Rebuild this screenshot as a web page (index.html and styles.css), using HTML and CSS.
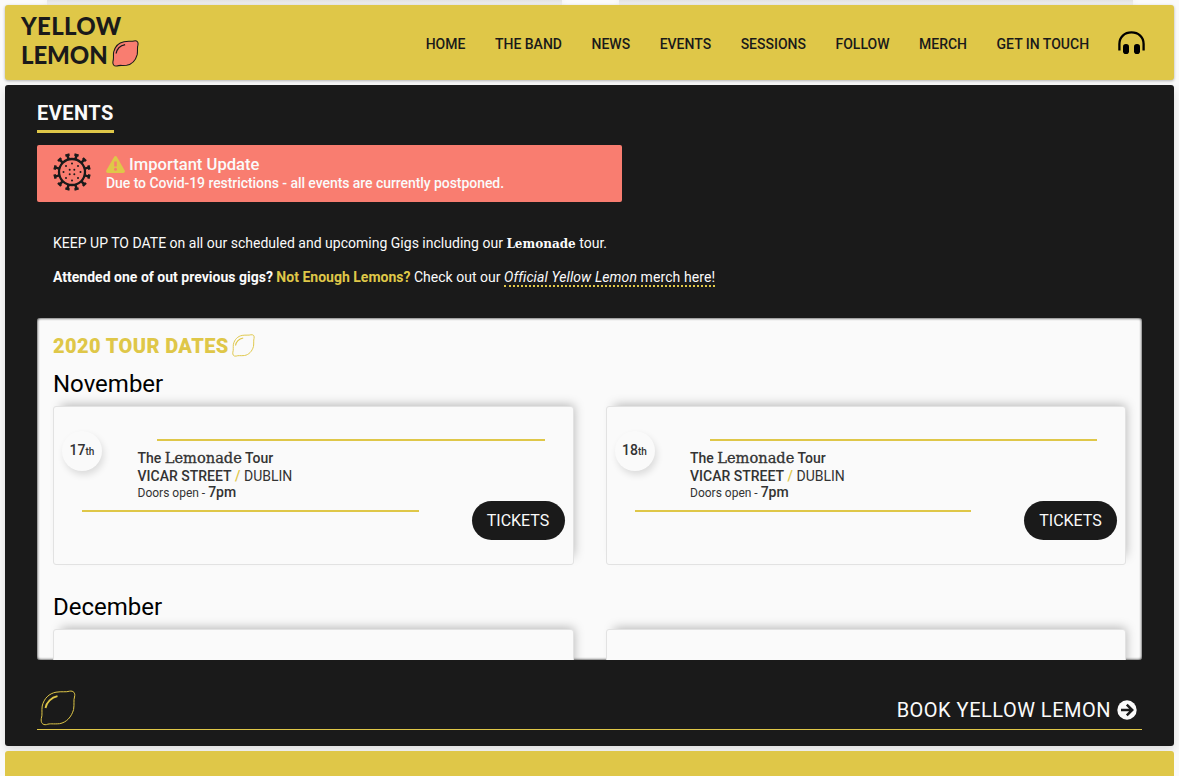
FILE: index.html
```html
<!DOCTYPE html>
<html lang="en">
<head>
<meta charset="utf-8">
<title>Yellow Lemon</title>
<link rel="stylesheet" href="styles.css">
</head>
<body>
<svg class="defs" width="0" height="0">
  <symbol id="lemon" viewBox="0 0 36 36">
    <path d="M16 2.200C22 1.200 26 2.400 29.500 1.200C33.500 .5 35.500 3 34.500 7C33.400 10 34.500 14 33.600 19.500C31.500 27 26.500 32.500 19.500 33.700C13 34.300 10 33.200 6.500 34.600C2.500 35.300 .6 32.500 1.300 28.500C2.600 25 1.500 21 2.200 16C4 8.500 9 3.500 16 2.200Z"/>
    <path class="shine" d="M5.500 18C6.500 12 11.500 7.500 17.500 6.200"/>
  </symbol>
</svg>

<div class="previous"><div class="previous-card"></div><div class="previous-card"></div></div>

<header class="header">
  <a class="logo"><span>YELLOW</span><span class="logo-row">LEMON <svg class="lemon lemon-logo"><use href="#lemon"/></svg></span></a>
  <nav class="nav">
    <a>HOME</a><a>THE BAND</a><a>NEWS</a><a>EVENTS</a><a>SESSIONS</a><a>FOLLOW</a><a>MERCH</a><a>GET IN TOUCH</a>
    <svg class="headphones" viewBox="0 0 27 25"><path d="M1.400 19.500V13C1.400 6 6.500 1.400 13.500 1.400S25.600 6 25.600 13V19.500" fill="none" stroke="#000" stroke-width="2.300"/><rect x="5" y="13" width="6" height="10" rx="2.800"/><rect x="16" y="13" width="6" height="10" rx="2.800"/></svg>
  </nav>
</header>

<main class="events">
  <h2 class="title"><span>EVENTS</span></h2>
  <div class="alert">
    <svg class="virus" viewBox="-19 -19 38 38">
      <circle r="13" fill="none" stroke="#1a1a1a" stroke-width="2.300"/>
      <g stroke="#1a1a1a" stroke-width="2.500">
        <g id="spikes"><path d="M0-13V-17M-2.200-17.500H2.200M0 13V17M-2.200 17.500H2.200" transform="rotate(15)"/><path d="M0-13V-17M-2.200-17.500H2.200M0 13V17M-2.200 17.500H2.200" transform="rotate(45)"/><path d="M0-13V-17M-2.200-17.500H2.200M0 13V17M-2.200 17.500H2.200" transform="rotate(75)"/></g>
        <use href="#spikes" transform="rotate(90)"/>
      </g>
      <g fill="#1a1a1a"><circle cy="-8.500" r="1"/><circle cy="8.500" r="1"/><circle cx="-8.500" r="1"/><circle cx="8.500" r="1"/><circle cx="-6" cy="-6" r="1"/><circle cx="6" cy="-6" r="1"/><circle cx="-6" cy="6" r="1"/><circle cx="6" cy="6" r="1"/><circle cx="-2.300" cy="-2.300" r="1"/><circle cx="2.300" cy="-2.300" r="1"/><circle cx="-2.300" cy="2.300" r="1"/><circle cx="2.300" cy="2.300" r="1"/></g>
    </svg>
    <div>
      <div class="alert-title"><svg class="warning" viewBox="0 0 19 17"><path d="M8.200 .8Q9.500-.8 10.800 .8L18.700 14.500Q19.300 16.600 17.300 17H1.700Q-.3 16.600 .3 14.500Z" fill="#dfc748"/><path d="M9.500 5.500V10.500" stroke="#f97d70" stroke-width="2.600"/><circle cx="9.500" cy="13.300" r="1.500" fill="#f97d70"/></svg><span>Important Update</span></div>
      <div class="alert-text">Due to Covid-19 restrictions - all events are currently postponed.</div>
    </div>
  </div>
  <div class="intro">
    <p>KEEP UP TO DATE on all our scheduled and upcoming Gigs including our <span class="slab">Lemonade</span> tour.</p>
    <p><b>Attended one of out previous gigs?</b> <b class="yellow">Not Enough Lemons?</b> Check out our <a class="merch"><i>Official Yellow Lemon</i> merch here!</a></p>
  </div>

  <section class="dates">
    <h3 class="dates-title">2020 TOUR DATES <svg class="lemon lemon-dates"><use href="#lemon"/></svg></h3>
    <h4 class="month">November</h4>
    <div class="cards">
      <article class="card">
        <div class="rule rule-top"></div>
        <div class="gig">
          <div class="day">17<small>th</small></div>
          <div class="info">
            <div class="tour">The <span class="slab">Lemonade</span> Tour</div>
            <div class="venue"><b>VICAR STREET</b> <b class="yellow">/</b> DUBLIN</div>
            <div class="doors">Doors open - <b>7pm</b></div>
          </div>
        </div>
        <div class="action"><div class="rule rule-bottom"></div><a class="tickets">TICKETS</a></div>
      </article>
      <article class="card">
        <div class="rule rule-top"></div>
        <div class="gig">
          <div class="day">18<small>th</small></div>
          <div class="info">
            <div class="tour">The <span class="slab">Lemonade</span> Tour</div>
            <div class="venue"><b>VICAR STREET</b> <b class="yellow">/</b> DUBLIN</div>
            <div class="doors">Doors open - <b>7pm</b></div>
          </div>
        </div>
        <div class="action"><div class="rule rule-bottom"></div><a class="tickets">TICKETS</a></div>
      </article>
    </div>
    <h4 class="month december">December</h4>
    <div class="cards"><article class="card"></article><article class="card"></article></div>
  </section>

  <div class="book">
    <svg class="lemon lemon-book"><use href="#lemon"/></svg>
    <a class="book-link">BOOK YELLOW LEMON
      <svg class="arrow" viewBox="0 0 20 20"><circle cx="10" cy="10" r="9.700" fill="#fafafa"/><path d="M4 10H15M9.800 4.700L15.200 10L9.800 15.300" fill="none" stroke="#1a1a1a" stroke-width="2.500"/></svg></a>
  </div>
</main>
<div class="next"></div>
</body>
</html>
```
FILE: styles.css
```css
* { box-sizing: border-box; }
body {
  margin: 0;
  padding: 0 5px;
  height: 776px;
  overflow: hidden;
  display: flex;
  flex-direction: column;
  background: #fafafa;
  font-family: Roboto, "Liberation Sans", sans-serif;
  font-size: 14px;
  color: #1a1a1a;
}
h2, h3, h4, p { margin: 0; }
b { font-weight: 700; }
.defs { position: absolute; }
.yellow { color: #dfc748; }
.slab { font-family: "DejaVu Serif", serif; }
.lemon { fill: none; stroke: #dfc748; stroke-width: 1; flex: none; overflow: visible; }
.shine { stroke-width: 1.8; }

.previous { height: 5px; flex: none; display: flex; gap: 57px; padding: 0 41px 0 42px; }
.previous-card { flex: 1; background: linear-gradient(#e2e2e2, #f0f0f0); box-shadow: 0 0 6px #eaeaea; }

.header {
  height: 75px;
  flex: none;
  display: flex;
  justify-content: space-between;
  background: #dfc748;
  border-radius: 3px;
  box-shadow: 0 1px 3px rgba(0, 0, 0, .3);
  padding: 6px 29px 0 16px;
}
.logo {
  display: flex;
  flex-direction: column;
  font: 900 24px/29px Lato, sans-serif;
  letter-spacing: .3px;
}
.logo-row { display: flex; align-items: center; gap: 4px; letter-spacing: -.1px; }
.lemon-logo { width: 27px; height: 27px; margin-top: -2px; fill: #f97d70; stroke: #1a1a1a; stroke-width: 1.4; }
.nav { display: flex; align-items: center; gap: 29.5px; height: 66px; font-weight: 500; }
.headphones { width: 27px; height: 25px; margin: -1px 0 0 -.6px; }

.events {
  height: 661px;
  flex: none;
  margin-top: 5px;
  padding: 15px 32px 16px;
  background: #1a1a1a;
  color: #fafafa;
  border-radius: 3px;
  box-shadow: 0 4px 10px rgba(0, 0, 0, .12);
  display: flex;
  flex-direction: column;
}
.title { display: flex; font-size: 20px; line-height: 27px; font-weight: 700; letter-spacing: .45px; }
.title span { height: 33px; border-bottom: 3px solid #dfc748; }

.alert {
  width: 585px;
  height: 57px;
  flex: none;
  margin-top: 12px;
  padding: 8px 16px;
  display: flex;
  gap: 15px;
  background: #f97d70;
  border-radius: 2px;
}
.virus { width: 38px; height: 38px; }
.alert-title { display: flex; align-items: center; gap: 4px; font-size: 16.6px; line-height: 22px; font-weight: 500; }
.alert-title span { padding-top: 1px; line-height: 21px; }
.warning { width: 19px; height: 17px; }
.alert-text { line-height: 16px; font-weight: 500; letter-spacing: -.06px; }

.intro { flex: none; margin-top: 33px; padding-left: 16px; height: 83px; line-height: 16px; letter-spacing: .01px; }
.intro p + p { margin-top: 17px; }
.intro .slab { font-size: 12px; font-weight: 700; }
.merch { display: inline-block; border-bottom: 2px dotted #dfc748; line-height: 16px; letter-spacing: .09px; }

.dates {
  height: 342px;
  flex: none;
  padding: 16px;
  overflow: hidden;
  background: #fafafa;
  box-shadow: inset 0 0 3px #000;
  border-radius: 3px;
  color: #333;
}
.dates-title {
  display: flex;
  align-items: center;
  gap: 3px;
  height: 24px;
  font-size: 20px;
  font-weight: 900;
  letter-spacing: .4px;
  color: #dfc748;
}
.lemon-dates { width: 23px; height: 23px; margin-top: -1px; stroke-width: 1.5; }
.month { margin-top: 12px; height: 28px; font-size: 24px; line-height: 28px; font-weight: 400; color: #000; }
.december { margin-top: 28px; }
.cards { display: grid; grid-template-columns: 1fr 1fr; gap: 32px; margin-top: 8px; }
.card {
  height: 159px;
  padding-top: 32px;
  border: 1px solid #e2e2e2;
  border-radius: 3px;
  background: #fafafa;
  box-shadow: 4px -5px 10px -4px rgba(0, 0, 0, .28);
}
.rule { height: 2px; background: #dfc748; }
.rule-top { margin: 0 28px 0 103px; }
.gig { display: flex; height: 60px; padding: 0 8px; gap: 35.5px; }
.day {
  width: 40px;
  height: 40px;
  margin-top: -10px;
  border-radius: 50%;
  background: #fafafa;
  box-shadow: 2px 4px 7px rgba(0, 0, 0, .12);
  text-align: center;
  line-height: 38px;
  font-weight: 500;
}
.day small { font-size: 10px; }
.info { padding-top: 8px; white-space: nowrap; }
.tour { line-height: 18px; font-weight: 500; }
.tour .slab { font-size: 14.6px; -webkit-text-stroke: .3px; }
.venue { line-height: 18px; }
.venue b { font-weight: 500; }
.doors { font-size: 12px; line-height: 15px; }
.doors b { font-size: 14px; font-weight: 500; }
.action { display: flex; justify-content: space-between; padding: 0 8px 0 28px; }
.rule-bottom { width: 336.5px; margin-top: 9px; }
.tickets {
  width: 93px;
  height: 39px;
  border-radius: 20px;
  background: #1a1a1a;
  color: #fafafa;
  font-size: 16px;
  line-height: 39px;
  text-align: center;
}

.book {
  flex: 1;
  display: flex;
  justify-content: space-between;
  padding: 31px 5px 0 3px;
  border-bottom: 1px solid #dfc748;
}
.lemon-book { width: 36px; height: 36px; margin-top: -1px; }
.book-link { display: flex; align-items: center; gap: 6px; height: 38px; font-size: 20px; letter-spacing: .5px; }
.arrow { width: 20px; height: 20px; }
.next { height: 40px; flex: none; margin-top: 5px; background: #dfc748; border-radius: 3px; }
```
